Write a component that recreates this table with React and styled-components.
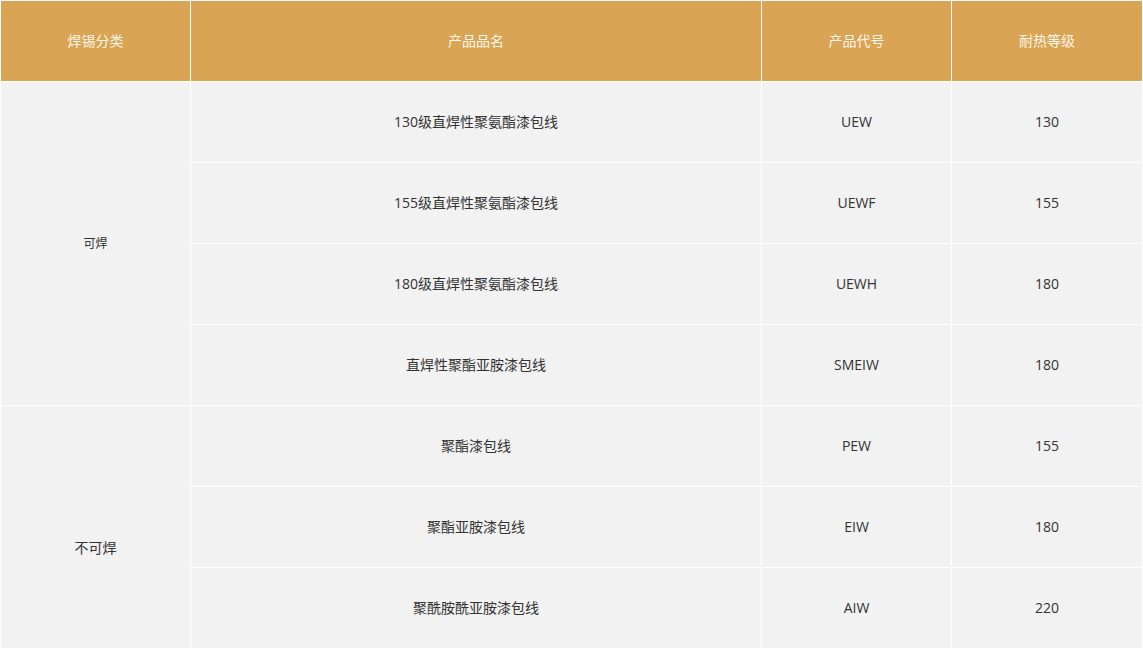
import React from 'react';
import styled, { createGlobalStyle } from 'styled-components';

const GlobalStyle = createGlobalStyle`
  html, body {
    margin: 0;
    padding: 0;
    background: #ffffff;
  }
  body {
    font-family: "Open Sans", "Noto Sans CJK SC", sans-serif;
  }
`;

const Table = styled.table`
  width: 1143px;
  border-collapse: collapse;
  table-layout: fixed;
  border: 1px solid #ffffff;
`;

const HeadCell = styled.th`
  width: ${props => props.$w}px;
  height: 80px;
  padding: 0;
  background: #d9a453;
  color: #fdf6ea;
  font-size: 14px;
  font-weight: 400;
  line-height: 20px;
  text-align: center;
  vertical-align: middle;
  border: 1px solid #ffffff;
`;

const Cell = styled.td`
  height: 80px;
  padding: ${props => (props.$drop ? `${props.$drop}px 0 0` : '0')};
  background: #f2f2f2;
  color: #333333;
  font-size: ${props => (props.$small ? '12px' : '14px')};
  line-height: 18px;
  text-align: center;
  vertical-align: middle;
  border: 1px solid #ffffff;
`;

const groups = [
  {
    name: '可焊',
    small: true,
    drop: 0,
    rows: [
      ['130级直焊性聚氨酯漆包线', 'UEW', '130'],
      ['155级直焊性聚氨酯漆包线', 'UEWF', '155'],
      ['180级直焊性聚氨酯漆包线', 'UEWH', '180'],
      ['直焊性聚酯亚胺漆包线', 'SMEIW', '180'],
    ],
  },
  {
    name: '不可焊',
    small: false,
    drop: 42,
    rows: [
      ['聚酯漆包线', 'PEW', '155'],
      ['聚酯亚胺漆包线', 'EIW', '180'],
      ['聚酰胺酰亚胺漆包线', 'AIW', '220'],
    ],
  },
];

export default function App() {
  return (
    <>
      <GlobalStyle />
      <Table>
        <thead>
          <tr>
            <HeadCell $w={189}>焊锡分类</HeadCell>
            <HeadCell $w={570}>产品品名</HeadCell>
            <HeadCell $w={189}>产品代号</HeadCell>
            <HeadCell $w={190}>耐热等级</HeadCell>
          </tr>
        </thead>
        <tbody>
          {groups.map(group =>
            group.rows.map((row, i) => (
              <tr key={group.name + i}>
                {i === 0 && (
                  <Cell rowSpan={group.rows.length} $small={group.small} $drop={group.drop}>
                    {group.name}
                  </Cell>
                )}
                <Cell>{row[0]}</Cell>
                <Cell>{row[1]}</Cell>
                <Cell>{row[2]}</Cell>
              </tr>
            ))
          )}
        </tbody>
      </Table>
    </>
  );
}
